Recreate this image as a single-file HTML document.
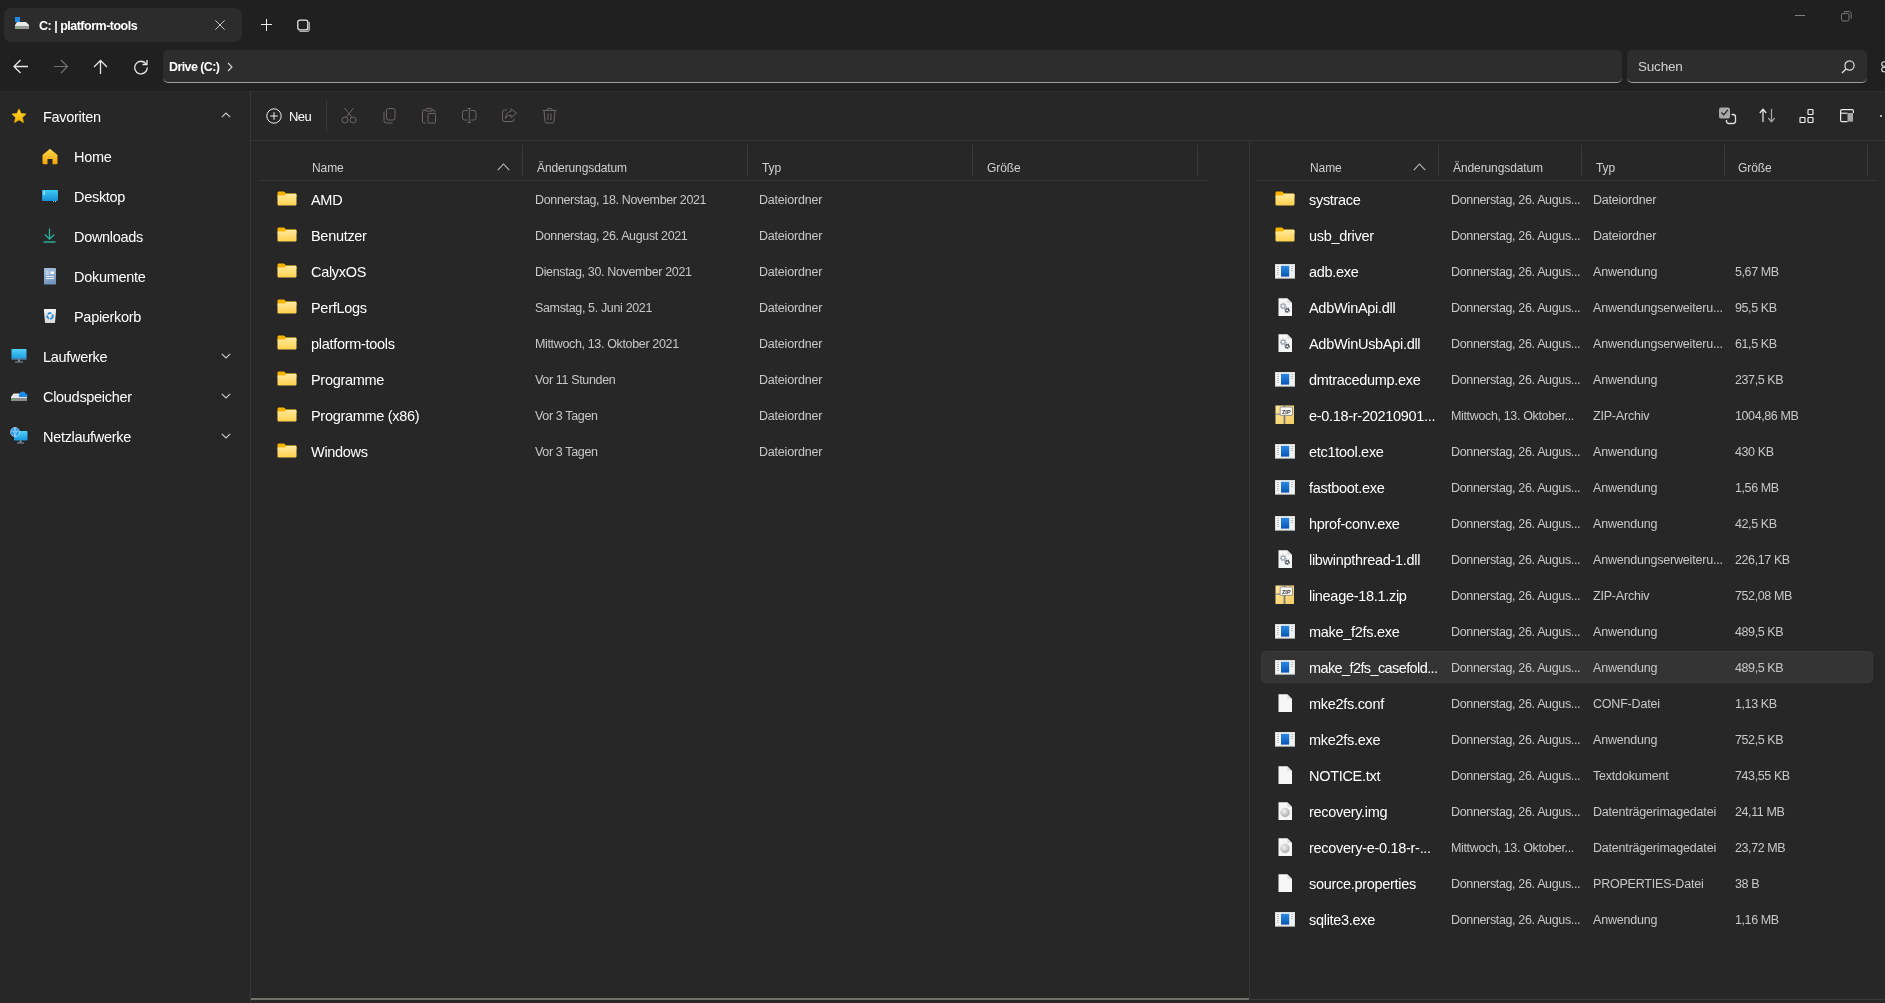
<!DOCTYPE html><html><head><meta charset="utf-8"><style>
html,body{margin:0;padding:0;width:1885px;height:1003px;overflow:hidden;background:#272727;font-family:"Liberation Sans", sans-serif;}
.t{position:absolute;white-space:nowrap;}
#root{position:absolute;left:0;top:0;width:1885px;height:1003px;will-change:transform;}
</style></head><body><div id="root">
<div style="position:absolute;left:0px;top:0px;width:1885px;height:91px;background:#202020"></div>
<div style="position:absolute;left:0px;top:91px;width:1885px;height:912px;background:#272727"></div>
<div style="position:absolute;left:250px;top:91px;width:1635px;height:1px;background:#2f2f2f"></div>
<div style="position:absolute;left:0px;top:91px;width:250px;height:1px;background:#2b2b2b"></div>
<div style="position:absolute;left:250px;top:91px;width:1px;height:912px;background:#373737"></div>
<div style="position:absolute;left:4px;top:8px;width:238px;height:34px;background:#2c2c2c;border-radius:7px"></div>
<svg style="position:absolute;left:14px;top:16px" width="16" height="14" viewBox="0 0 16 14"><rect x="1" y="1" width="5" height="5" fill="#1e88e5"/><path d="M3 6 L12 6 L15 9 L15 13 L1 13 L1 9 Z" fill="#e8e8e8"/><rect x="1" y="10" width="14" height="3" fill="#9a9a9a"/><rect x="3" y="11" width="2" height="1" fill="#3fd13f"/></svg>
<div class="t" style="left:39px;top:20.22px;font-size:12.5px;line-height:12.5px;color:#ffffff;font-weight:700;letter-spacing:-0.5px;">C: | platform-tools</div>
<svg style="position:absolute;left:215px;top:20px" width="10" height="10" viewBox="0 0 10 10"><path d="M0.3 0.3 L9.7 9.7 M9.7 0.3 L0.3 9.7" stroke="#c4c4c4" stroke-width="1"/></svg>
<svg style="position:absolute;left:261px;top:19px" width="11" height="12" viewBox="0 0 11 12"><path d="M5.5 0 V12 M0 5.5 H11" stroke="#ececec" stroke-width="1"/></svg>
<svg style="position:absolute;left:296px;top:19px" width="15" height="14" viewBox="0 0 15 14"><rect x="1.8" y="1.2" width="10" height="9.6" rx="2" fill="none" stroke="#e6e6e6" stroke-width="1.3"/><path d="M3.5 12.3 H11 Q13.3 12.3 13.3 10 V3" fill="none" stroke="#b0b0b0" stroke-width="1.3"/></svg>
<div style="position:absolute;left:1795px;top:15px;width:10px;height:1px;background:#808080"></div>
<svg style="position:absolute;left:1841px;top:11px" width="11" height="11" viewBox="0 0 11 11"><rect x="0.5" y="2.5" width="7.5" height="7.5" rx="1.5" fill="none" stroke="#767676"/><path d="M2.8 0.5 H8.2 Q10.2 0.5 10.2 2.5 V7.5" fill="none" stroke="#767676"/></svg>
<svg style="position:absolute;left:13px;top:59px" width="16" height="15" viewBox="0 0 16 15"><path d="M15 7.5 H1.5 M7.5 1 L1 7.5 L7.5 14" fill="none" stroke="#e8e8e8" stroke-width="1.3"/></svg>
<svg style="position:absolute;left:53px;top:59px" width="16" height="15" viewBox="0 0 16 15"><path d="M1 7.5 H14.3 M8 1 L14.5 7.5 L8 14" fill="none" stroke="#737373" stroke-width="1.2"/></svg>
<svg style="position:absolute;left:93px;top:59px" width="15" height="16" viewBox="0 0 15 16"><path d="M7.5 15 V1.5 M1 8 L7.5 1.5 L14 8" fill="none" stroke="#e8e8e8" stroke-width="1.3"/></svg>
<svg style="position:absolute;left:133px;top:59px" width="16" height="16" viewBox="0 0 16 16"><path d="M13.2 5 A6.3 6.3 0 1 0 14.3 8.5" fill="none" stroke="#e8e8e8" stroke-width="1.3"/><path d="M14 1 V5.5 H9.5" fill="none" stroke="#e8e8e8" stroke-width="1.3"/></svg>
<div style="position:absolute;left:163px;top:50px;width:1459px;height:32px;background:#2d2d2d;border-radius:5px;border-bottom:1px solid #9d9d9d;box-sizing:content-box"></div>
<div class="t" style="left:169px;top:60.72px;font-size:12.5px;line-height:12.5px;color:#ffffff;font-weight:700;letter-spacing:-0.6px;">Drive (C:)</div>
<svg style="position:absolute;left:227px;top:62px" width="6" height="10" viewBox="0 0 6 10"><path d="M1 1 L5 5 L1 9" fill="none" stroke="#dcdcdc" stroke-width="1.1"/></svg>
<div style="position:absolute;left:1627px;top:50px;width:240px;height:32px;background:#2d2d2d;border-radius:5px;border-bottom:1px solid #9d9d9d;box-sizing:content-box"></div>
<div class="t" style="left:1638px;top:60.17px;font-size:13.5px;line-height:13.5px;color:#d0d0d0;font-weight:400;letter-spacing:-0.2px;">Suchen</div>
<svg style="position:absolute;left:1841px;top:60px" width="14" height="14" viewBox="0 0 14 14"><circle cx="8.5" cy="5.5" r="4.6" fill="none" stroke="#e0e0e0" stroke-width="1.2"/><path d="M5.2 8.8 L1 13" stroke="#e0e0e0" stroke-width="1.3"/></svg>
<svg style="position:absolute;left:1880px;top:61px" width="5" height="12" viewBox="0 0 5 12"><circle cx="4" cy="3" r="2.3" fill="none" stroke="#ddd" stroke-width="1.1"/><circle cx="4" cy="8.5" r="2.3" fill="none" stroke="#ddd" stroke-width="1.1"/></svg>
<svg style="position:absolute;left:266px;top:107.5px" width="16" height="16" viewBox="0 0 16 16"><circle cx="8" cy="8" r="7.2" fill="none" stroke="#ececec" stroke-width="1"/><path d="M8 4.2 V11.8 M4.2 8 H11.8" stroke="#ececec" stroke-width="1"/></svg>
<div class="t" style="left:289px;top:109.70px;font-size:13px;line-height:13px;color:#ffffff;font-weight:400;letter-spacing:-0.6px;">Neu</div>
<div style="position:absolute;left:326px;top:100px;width:1px;height:31px;background:#3a3a3a"></div>
<svg style="position:absolute;left:341px;top:107px" width="17" height="17" viewBox="0 0 17 17"><path d="M3.5 1 L10.8 10.2 M12.5 1 L5.2 10.2" fill="none" stroke="#6a6764" stroke-width="1"/><circle cx="4" cy="13" r="3" fill="none" stroke="#6a6764" stroke-width="1"/><circle cx="12" cy="13" r="3" fill="none" stroke="#6a6764" stroke-width="1"/></svg>
<svg style="position:absolute;left:382px;top:107px" width="15" height="17" viewBox="0 0 15 17"><rect x="4.5" y="1.5" width="8.5" height="11.5" rx="2" fill="none" stroke="#6a6764" stroke-width="1"/><path d="M2 4.5 V13.5 Q2 16 4.5 16 H10.5" fill="none" stroke="#6a6764" stroke-width="1"/></svg>
<svg style="position:absolute;left:421px;top:107px" width="17" height="17" viewBox="0 0 17 17"><path d="M4.5 3 H3 Q1.5 3 1.5 4.5 V14.5 Q1.5 16 3 16 H5 M11 3 H12.5 Q14 3 14 4.5 V5.5" fill="none" stroke="#6a6764" stroke-width="1"/><path d="M4.5 4 V2.5 Q4.5 1.5 5.5 1.5 H10 Q11 1.5 11 2.5 V4 Z" fill="none" stroke="#6a6764" stroke-width="1"/><rect x="7" y="6.5" width="7.5" height="9.5" rx="0.8" fill="none" stroke="#6a6764" stroke-width="1"/></svg>
<svg style="position:absolute;left:461px;top:107px" width="17" height="17" viewBox="0 0 17 17"><path d="M6.5 3.5 H3.5 Q1.5 3.5 1.5 5.5 V11 Q1.5 13 3.5 13 H6.5 M10 3.5 H13 Q15 3.5 15 5.5 V11 Q15 13 13 13 H10 M8.3 1.5 V15.5 M6.5 1.5 H10 M6.5 15.5 H10" fill="none" stroke="#6a6764" stroke-width="1"/></svg>
<svg style="position:absolute;left:501px;top:107px" width="17" height="16" viewBox="0 0 17 16"><path d="M6 3 H3.5 Q1.5 3 1.5 5 V12.5 Q1.5 14.5 3.5 14.5 H11 Q13 14.5 13 12.5 V11.5" fill="none" stroke="#6a6764" stroke-width="1"/><path d="M10 1.8 L15.5 6.2 L10 10.5 V8 Q6.5 8 4.5 11.5 Q5 4.8 10 4.5 Z" fill="none" stroke="#6a6764" stroke-width="1" stroke-linejoin="round"/></svg>
<svg style="position:absolute;left:541px;top:107px" width="17" height="17" viewBox="0 0 17 17"><path d="M1.5 3.5 H15.5 M6 3.5 V2.5 Q6 1.5 7 1.5 H10 Q11 1.5 11 2.5 V3.5 M3 3.5 L4 14.5 Q4.2 16 5.5 16 H11.5 Q12.8 16 13 14.5 L14 3.5 M7 6.5 V13 M10 6.5 V13" fill="none" stroke="#6a6764" stroke-width="1"/></svg>
<svg style="position:absolute;left:1718px;top:106px" width="19" height="19" viewBox="0 0 19 19"><rect x="1" y="1.5" width="11" height="11" rx="2" fill="#a8a8a8"/><path d="M3.5 6.5 L5.8 8.8 L9.8 3.8" fill="none" stroke="#202020" stroke-width="1.2"/><path d="M13.5 8.5 H15 Q17.5 8.5 17.5 11 V15 Q17.5 17.5 15 17.5 H11 Q8.5 17.5 8.5 15 V14" fill="none" stroke="#e0e0e0" stroke-width="1.3"/></svg>
<svg style="position:absolute;left:1759px;top:108px" width="17" height="15" viewBox="0 0 17 15"><path d="M4 14 V1.5 M0.8 5 L4 1.2 L7.2 5" fill="none" stroke="#ececec" stroke-width="1.2"/><path d="M12.5 1 V13.5 M9.3 10 L12.5 13.8 L15.7 10" fill="none" stroke="#a8a8a8" stroke-width="1.2"/></svg>
<svg style="position:absolute;left:1799px;top:108px" width="16" height="16" viewBox="0 0 16 16"><rect x="9" y="1.5" width="5" height="5" rx="0.8" fill="none" stroke="#f0f0f0" stroke-width="1.2"/><rect x="1" y="9.5" width="5" height="5" rx="0.8" fill="none" stroke="#f0f0f0" stroke-width="1.2"/><rect x="9" y="9.5" width="5" height="5" rx="0.8" fill="none" stroke="#f0f0f0" stroke-width="1.2"/></svg>
<svg style="position:absolute;left:1839px;top:108px" width="16" height="15" viewBox="0 0 16 15"><rect x="8.5" y="5" width="5.5" height="8.6" fill="#a8a8a8"/><path d="M8.5 13.6 H3 Q1.6 13.6 1.6 12 V3 Q1.6 1.6 3 1.6 H13 Q14.4 1.6 14.4 3 V5" fill="none" stroke="#ececec" stroke-width="1.2"/><path d="M1.6 5.2 H8.5" stroke="#ececec" stroke-width="1.1"/></svg>
<div style="position:absolute;left:1880px;top:115px;width:2px;height:2px;background:#e0e0e0;border-radius:1px"></div>
<svg style="position:absolute;left:11px;top:108px" width="16" height="16" viewBox="0 0 16 16"><defs><linearGradient id="gs" x1="0" y1="0" x2="0" y2="1"><stop offset="0" stop-color="#ffd43b"/><stop offset="1" stop-color="#f7b400"/></linearGradient></defs><path d="M8 1 L10.1 5.6 L15 6.1 L11.3 9.4 L12.4 14.4 L8 11.8 L3.6 14.4 L4.7 9.4 L1 6.1 L5.9 5.6 Z" fill="url(#gs)" stroke="#f5b800" stroke-width="0.8" stroke-linejoin="round"/></svg>
<div class="t" style="left:43px;top:109.63px;font-size:14.5px;line-height:14.5px;color:#ffffff;font-weight:400;letter-spacing:-0.3px;">Favoriten</div>
<svg style="position:absolute;left:221px;top:112px" width="10" height="6" viewBox="0 0 10 6"><path d="M0.8 5.2 L5 1 L9.2 5.2" fill="none" stroke="#cfcfcf" stroke-width="1.1"/></svg>
<svg style="position:absolute;left:42px;top:148px" width="16" height="17" viewBox="0 0 16 17"><defs><linearGradient id="gh" x1="0" y1="0" x2="0" y2="1"><stop offset="0" stop-color="#ffd64a"/><stop offset="1" stop-color="#f0a30a"/></linearGradient></defs><path d="M8 0.8 L15.5 7 V15 Q15.5 16.3 14.2 16.3 H10.5 V11 H5.5 V16.3 H1.8 Q0.5 16.3 0.5 15 V7 Z" fill="url(#gh)"/></svg>
<div class="t" style="left:74px;top:149.93px;font-size:14.5px;line-height:14.5px;color:#ffffff;font-weight:400;letter-spacing:-0.3px;">Home</div>
<svg style="position:absolute;left:42px;top:189px" width="16" height="14" viewBox="0 0 16 14"><defs><linearGradient id="gd" x1="0" y1="0" x2="0" y2="1"><stop offset="0" stop-color="#3ccbf4"/><stop offset="1" stop-color="#1a8ed8"/></linearGradient></defs><rect x="0" y="1" width="16" height="11" rx="0.8" fill="url(#gd)"/><rect x="1.5" y="2.5" width="1.5" height="1" fill="#fff"/><rect x="1.5" y="4.5" width="1.5" height="1" fill="#fff"/><rect x="11" y="12" width="1" height="1" fill="#9cd"/><rect x="13" y="12" width="1" height="1" fill="#9cd"/></svg>
<div class="t" style="left:74px;top:189.93px;font-size:14.5px;line-height:14.5px;color:#ffffff;font-weight:400;letter-spacing:-0.3px;">Desktop</div>
<svg style="position:absolute;left:43px;top:228px" width="13" height="15" viewBox="0 0 13 15"><path d="M6.5 0.5 V11 M1.8 6.5 L6.5 11.2 L11.2 6.5" fill="none" stroke="#2bb5a0" stroke-width="1.3"/><path d="M0.5 14 H12.5" stroke="#2bb5a0" stroke-width="1.4"/></svg>
<div class="t" style="left:74px;top:229.93px;font-size:14.5px;line-height:14.5px;color:#ffffff;font-weight:400;letter-spacing:-0.3px;">Downloads</div>
<svg style="position:absolute;left:44px;top:268px" width="12" height="17" viewBox="0 0 12 17"><defs><linearGradient id="gk" x1="0" y1="0" x2="0.3" y2="1"><stop offset="0" stop-color="#a9c5e2"/><stop offset="1" stop-color="#7596bd"/></linearGradient></defs><rect x="0" y="0" width="12" height="16.5" rx="1" fill="url(#gk)"/><path d="M2 4 H5 M2 6 H5 M2 8.5 H10 M2 10.5 H10" stroke="#dfe8f2" stroke-width="1"/><rect x="6.5" y="3.5" width="3.5" height="2.5" fill="#ffffff"/></svg>
<div class="t" style="left:74px;top:269.93px;font-size:14.5px;line-height:14.5px;color:#ffffff;font-weight:400;letter-spacing:-0.3px;">Dokumente</div>
<svg style="position:absolute;left:44px;top:309px" width="12" height="14" viewBox="0 0 12 14"><defs><linearGradient id="gb" x1="0" y1="0" x2="0" y2="1"><stop offset="0" stop-color="#f4f4f4"/><stop offset="1" stop-color="#d8d8d8"/></linearGradient></defs><path d="M0 0.5 Q0 0 0.5 0 H11.5 Q12 0 12 0.5 V2 L11 13.5 Q11 14 10.5 14 H1.5 Q1 14 1 13.5 L0 2 Z" fill="url(#gb)"/><circle cx="6" cy="7" r="2.8" fill="none" stroke="#1e8ae6" stroke-width="1.7" stroke-dasharray="4 1.2"/></svg>
<div class="t" style="left:74px;top:309.93px;font-size:14.5px;line-height:14.5px;color:#ffffff;font-weight:400;letter-spacing:-0.3px;">Papierkorb</div>
<svg style="position:absolute;left:11px;top:348px" width="16" height="16" viewBox="0 0 16 16"><defs><linearGradient id="gl" x1="0" y1="0" x2="0" y2="1"><stop offset="0" stop-color="#4fd2f8"/><stop offset="1" stop-color="#1a98e0"/></linearGradient></defs><rect x="0.5" y="1" width="15" height="10.5" rx="0.8" fill="url(#gl)"/><rect x="0.5" y="10.5" width="15" height="1.2" fill="#5a6b7a"/><rect x="7" y="11.5" width="2" height="2" fill="#8899aa"/><rect x="4" y="13.5" width="8" height="1" fill="#8899aa"/></svg>
<div class="t" style="left:43px;top:349.63px;font-size:14.5px;line-height:14.5px;color:#ffffff;font-weight:400;letter-spacing:-0.3px;">Laufwerke</div>
<svg style="position:absolute;left:221px;top:353px" width="10" height="6" viewBox="0 0 10 6"><path d="M0.8 0.8 L5 5 L9.2 0.8" fill="none" stroke="#cfcfcf" stroke-width="1.1"/></svg>
<svg style="position:absolute;left:10px;top:389px" width="18" height="14" viewBox="0 0 18 14"><path d="M1 8 L3.5 4.5 H14.5 L17 8 V12 H1 Z" fill="#e6e6e6"/><rect x="1" y="9" width="16" height="3" fill="#8a8a8a"/><rect x="3" y="10" width="2" height="1" fill="#3fd13f"/><path d="M9 6 Q9.5 2.5 12.5 2.5 Q15 2.5 15.5 4.5 Q17.5 4.5 17.5 6.5 Q17.5 8 16 8 H9.5 Q8 8 9 6 Z" fill="#1e88e5"/></svg>
<div class="t" style="left:43px;top:389.63px;font-size:14.5px;line-height:14.5px;color:#ffffff;font-weight:400;letter-spacing:-0.3px;">Cloudspeicher</div>
<svg style="position:absolute;left:221px;top:393px" width="10" height="6" viewBox="0 0 10 6"><path d="M0.8 0.8 L5 5 L9.2 0.8" fill="none" stroke="#cfcfcf" stroke-width="1.1"/></svg>
<svg style="position:absolute;left:10px;top:427px" width="18" height="17" viewBox="0 0 18 17"><defs><linearGradient id="gn" x1="0" y1="0" x2="0" y2="1"><stop offset="0" stop-color="#4fd2f8"/><stop offset="1" stop-color="#1a98e0"/></linearGradient></defs><rect x="4" y="4" width="13.5" height="9.5" rx="0.8" fill="url(#gn)"/><rect x="9.5" y="13.5" width="2" height="2" fill="#8899aa"/><rect x="7" y="15.5" width="7" height="1" fill="#8899aa"/><circle cx="5" cy="5" r="4.5" fill="#2a9be8" stroke="#e0f0ff" stroke-width="0.6"/><path d="M1.5 4 Q5 6 8.5 4 M5 0.5 Q2.5 5 5 9.5 M5 0.5 Q7.5 5 5 9.5" fill="none" stroke="#bfe4ff" stroke-width="0.6"/></svg>
<div class="t" style="left:43px;top:429.63px;font-size:14.5px;line-height:14.5px;color:#ffffff;font-weight:400;letter-spacing:-0.3px;">Netzlaufwerke</div>
<svg style="position:absolute;left:221px;top:433px" width="10" height="6" viewBox="0 0 10 6"><path d="M0.8 0.8 L5 5 L9.2 0.8" fill="none" stroke="#cfcfcf" stroke-width="1.1"/></svg>
<div class="t" style="left:312px;top:162.14px;font-size:12px;line-height:12px;color:#d0d0d0;font-weight:400;letter-spacing:-0.1px;">Name</div>
<svg style="position:absolute;left:497px;top:163px" width="13" height="8" viewBox="0 0 13 8"><path d="M0.8 7.2 L6.5 1 L12.2 7.2" fill="none" stroke="#bdbdbd" stroke-width="1.1"/></svg>
<div style="position:absolute;left:522px;top:145px;width:1px;height:31px;background:#3a3a3a"></div>
<div style="position:absolute;left:747px;top:145px;width:1px;height:31px;background:#3a3a3a"></div>
<div style="position:absolute;left:972px;top:145px;width:1px;height:31px;background:#3a3a3a"></div>
<div style="position:absolute;left:1197px;top:145px;width:1px;height:31px;background:#3a3a3a"></div>
<div class="t" style="left:537px;top:162.14px;font-size:12px;line-height:12px;color:#d0d0d0;font-weight:400;letter-spacing:-0.1px;">Änderungsdatum</div>
<div class="t" style="left:762px;top:162.14px;font-size:12px;line-height:12px;color:#d0d0d0;font-weight:400;letter-spacing:-0.1px;">Typ</div>
<div class="t" style="left:987px;top:162.14px;font-size:12px;line-height:12px;color:#d0d0d0;font-weight:400;letter-spacing:-0.1px;">Größe</div>
<div style="position:absolute;left:259px;top:180px;width:948px;height:1px;background:#363636"></div>
<svg style="position:absolute;left:277px;top:191px" width="20" height="15" viewBox="0 0 20 15"><defs><linearGradient id="gf191" x1="0" y1="0" x2="0" y2="1"><stop offset="0" stop-color="#ffeaa0"/><stop offset="1" stop-color="#ffd04c"/></linearGradient></defs><path d="M0.5 1.8 Q0.5 0.5 1.8 0.5 H7 L9.3 2.6 H18.2 Q19.5 2.6 19.5 3.9 V6 H0.5 Z" fill="#f5b300"/><path d="M0.5 4.4 H7.5 L9.5 2.7 H18.2 Q19.5 2.7 19.5 4 V13.2 Q19.5 14.5 18.2 14.5 H1.8 Q0.5 14.5 0.5 13.2 Z" fill="url(#gf191)"/></svg>
<div class="t" style="left:311px;top:193.33px;font-size:14.5px;line-height:14.5px;color:#ffffff;font-weight:400;letter-spacing:-0.3px;">AMD</div>
<div class="t" style="left:535px;top:193.82px;font-size:12.5px;line-height:12.5px;color:#c8c8c8;font-weight:400;letter-spacing:-0.35px;">Donnerstag, 18. November 2021</div>
<div class="t" style="left:759px;top:193.82px;font-size:12.5px;line-height:12.5px;color:#c8c8c8;font-weight:400;letter-spacing:-0.2px;">Dateiordner</div>
<svg style="position:absolute;left:277px;top:227px" width="20" height="15" viewBox="0 0 20 15"><defs><linearGradient id="gf227" x1="0" y1="0" x2="0" y2="1"><stop offset="0" stop-color="#ffeaa0"/><stop offset="1" stop-color="#ffd04c"/></linearGradient></defs><path d="M0.5 1.8 Q0.5 0.5 1.8 0.5 H7 L9.3 2.6 H18.2 Q19.5 2.6 19.5 3.9 V6 H0.5 Z" fill="#f5b300"/><path d="M0.5 4.4 H7.5 L9.5 2.7 H18.2 Q19.5 2.7 19.5 4 V13.2 Q19.5 14.5 18.2 14.5 H1.8 Q0.5 14.5 0.5 13.2 Z" fill="url(#gf227)"/></svg>
<div class="t" style="left:311px;top:229.33px;font-size:14.5px;line-height:14.5px;color:#ffffff;font-weight:400;letter-spacing:-0.3px;">Benutzer</div>
<div class="t" style="left:535px;top:229.82px;font-size:12.5px;line-height:12.5px;color:#c8c8c8;font-weight:400;letter-spacing:-0.35px;">Donnerstag, 26. August 2021</div>
<div class="t" style="left:759px;top:229.82px;font-size:12.5px;line-height:12.5px;color:#c8c8c8;font-weight:400;letter-spacing:-0.2px;">Dateiordner</div>
<svg style="position:absolute;left:277px;top:263px" width="20" height="15" viewBox="0 0 20 15"><defs><linearGradient id="gf263" x1="0" y1="0" x2="0" y2="1"><stop offset="0" stop-color="#ffeaa0"/><stop offset="1" stop-color="#ffd04c"/></linearGradient></defs><path d="M0.5 1.8 Q0.5 0.5 1.8 0.5 H7 L9.3 2.6 H18.2 Q19.5 2.6 19.5 3.9 V6 H0.5 Z" fill="#f5b300"/><path d="M0.5 4.4 H7.5 L9.5 2.7 H18.2 Q19.5 2.7 19.5 4 V13.2 Q19.5 14.5 18.2 14.5 H1.8 Q0.5 14.5 0.5 13.2 Z" fill="url(#gf263)"/></svg>
<div class="t" style="left:311px;top:265.33px;font-size:14.5px;line-height:14.5px;color:#ffffff;font-weight:400;letter-spacing:-0.3px;">CalyxOS</div>
<div class="t" style="left:535px;top:265.82px;font-size:12.5px;line-height:12.5px;color:#c8c8c8;font-weight:400;letter-spacing:-0.35px;">Dienstag, 30. November 2021</div>
<div class="t" style="left:759px;top:265.82px;font-size:12.5px;line-height:12.5px;color:#c8c8c8;font-weight:400;letter-spacing:-0.2px;">Dateiordner</div>
<svg style="position:absolute;left:277px;top:299px" width="20" height="15" viewBox="0 0 20 15"><defs><linearGradient id="gf299" x1="0" y1="0" x2="0" y2="1"><stop offset="0" stop-color="#ffeaa0"/><stop offset="1" stop-color="#ffd04c"/></linearGradient></defs><path d="M0.5 1.8 Q0.5 0.5 1.8 0.5 H7 L9.3 2.6 H18.2 Q19.5 2.6 19.5 3.9 V6 H0.5 Z" fill="#f5b300"/><path d="M0.5 4.4 H7.5 L9.5 2.7 H18.2 Q19.5 2.7 19.5 4 V13.2 Q19.5 14.5 18.2 14.5 H1.8 Q0.5 14.5 0.5 13.2 Z" fill="url(#gf299)"/></svg>
<div class="t" style="left:311px;top:301.33px;font-size:14.5px;line-height:14.5px;color:#ffffff;font-weight:400;letter-spacing:-0.3px;">PerfLogs</div>
<div class="t" style="left:535px;top:301.82px;font-size:12.5px;line-height:12.5px;color:#c8c8c8;font-weight:400;letter-spacing:-0.35px;">Samstag, 5. Juni 2021</div>
<div class="t" style="left:759px;top:301.82px;font-size:12.5px;line-height:12.5px;color:#c8c8c8;font-weight:400;letter-spacing:-0.2px;">Dateiordner</div>
<svg style="position:absolute;left:277px;top:335px" width="20" height="15" viewBox="0 0 20 15"><defs><linearGradient id="gf335" x1="0" y1="0" x2="0" y2="1"><stop offset="0" stop-color="#ffeaa0"/><stop offset="1" stop-color="#ffd04c"/></linearGradient></defs><path d="M0.5 1.8 Q0.5 0.5 1.8 0.5 H7 L9.3 2.6 H18.2 Q19.5 2.6 19.5 3.9 V6 H0.5 Z" fill="#f5b300"/><path d="M0.5 4.4 H7.5 L9.5 2.7 H18.2 Q19.5 2.7 19.5 4 V13.2 Q19.5 14.5 18.2 14.5 H1.8 Q0.5 14.5 0.5 13.2 Z" fill="url(#gf335)"/></svg>
<div class="t" style="left:311px;top:337.33px;font-size:14.5px;line-height:14.5px;color:#ffffff;font-weight:400;letter-spacing:-0.3px;">platform-tools</div>
<div class="t" style="left:535px;top:337.82px;font-size:12.5px;line-height:12.5px;color:#c8c8c8;font-weight:400;letter-spacing:-0.35px;">Mittwoch, 13. Oktober 2021</div>
<div class="t" style="left:759px;top:337.82px;font-size:12.5px;line-height:12.5px;color:#c8c8c8;font-weight:400;letter-spacing:-0.2px;">Dateiordner</div>
<svg style="position:absolute;left:277px;top:371px" width="20" height="15" viewBox="0 0 20 15"><defs><linearGradient id="gf371" x1="0" y1="0" x2="0" y2="1"><stop offset="0" stop-color="#ffeaa0"/><stop offset="1" stop-color="#ffd04c"/></linearGradient></defs><path d="M0.5 1.8 Q0.5 0.5 1.8 0.5 H7 L9.3 2.6 H18.2 Q19.5 2.6 19.5 3.9 V6 H0.5 Z" fill="#f5b300"/><path d="M0.5 4.4 H7.5 L9.5 2.7 H18.2 Q19.5 2.7 19.5 4 V13.2 Q19.5 14.5 18.2 14.5 H1.8 Q0.5 14.5 0.5 13.2 Z" fill="url(#gf371)"/></svg>
<div class="t" style="left:311px;top:373.33px;font-size:14.5px;line-height:14.5px;color:#ffffff;font-weight:400;letter-spacing:-0.3px;">Programme</div>
<div class="t" style="left:535px;top:373.82px;font-size:12.5px;line-height:12.5px;color:#c8c8c8;font-weight:400;letter-spacing:-0.35px;">Vor 11 Stunden</div>
<div class="t" style="left:759px;top:373.82px;font-size:12.5px;line-height:12.5px;color:#c8c8c8;font-weight:400;letter-spacing:-0.2px;">Dateiordner</div>
<svg style="position:absolute;left:277px;top:407px" width="20" height="15" viewBox="0 0 20 15"><defs><linearGradient id="gf407" x1="0" y1="0" x2="0" y2="1"><stop offset="0" stop-color="#ffeaa0"/><stop offset="1" stop-color="#ffd04c"/></linearGradient></defs><path d="M0.5 1.8 Q0.5 0.5 1.8 0.5 H7 L9.3 2.6 H18.2 Q19.5 2.6 19.5 3.9 V6 H0.5 Z" fill="#f5b300"/><path d="M0.5 4.4 H7.5 L9.5 2.7 H18.2 Q19.5 2.7 19.5 4 V13.2 Q19.5 14.5 18.2 14.5 H1.8 Q0.5 14.5 0.5 13.2 Z" fill="url(#gf407)"/></svg>
<div class="t" style="left:311px;top:409.33px;font-size:14.5px;line-height:14.5px;color:#ffffff;font-weight:400;letter-spacing:-0.3px;">Programme (x86)</div>
<div class="t" style="left:535px;top:409.82px;font-size:12.5px;line-height:12.5px;color:#c8c8c8;font-weight:400;letter-spacing:-0.35px;">Vor 3 Tagen</div>
<div class="t" style="left:759px;top:409.82px;font-size:12.5px;line-height:12.5px;color:#c8c8c8;font-weight:400;letter-spacing:-0.2px;">Dateiordner</div>
<svg style="position:absolute;left:277px;top:443px" width="20" height="15" viewBox="0 0 20 15"><defs><linearGradient id="gf443" x1="0" y1="0" x2="0" y2="1"><stop offset="0" stop-color="#ffeaa0"/><stop offset="1" stop-color="#ffd04c"/></linearGradient></defs><path d="M0.5 1.8 Q0.5 0.5 1.8 0.5 H7 L9.3 2.6 H18.2 Q19.5 2.6 19.5 3.9 V6 H0.5 Z" fill="#f5b300"/><path d="M0.5 4.4 H7.5 L9.5 2.7 H18.2 Q19.5 2.7 19.5 4 V13.2 Q19.5 14.5 18.2 14.5 H1.8 Q0.5 14.5 0.5 13.2 Z" fill="url(#gf443)"/></svg>
<div class="t" style="left:311px;top:445.33px;font-size:14.5px;line-height:14.5px;color:#ffffff;font-weight:400;letter-spacing:-0.3px;">Windows</div>
<div class="t" style="left:535px;top:445.82px;font-size:12.5px;line-height:12.5px;color:#c8c8c8;font-weight:400;letter-spacing:-0.35px;">Vor 3 Tagen</div>
<div class="t" style="left:759px;top:445.82px;font-size:12.5px;line-height:12.5px;color:#c8c8c8;font-weight:400;letter-spacing:-0.2px;">Dateiordner</div>
<div style="position:absolute;left:251px;top:998px;width:998px;height:2px;background:#72706b"></div>
<div style="position:absolute;left:1250px;top:999px;width:635px;height:1px;background:#3a3a3a"></div>
<div style="position:absolute;left:1249px;top:140px;width:1px;height:859px;background:#353535"></div>
<div style="position:absolute;left:250px;top:140px;width:1635px;height:1px;background:#343434"></div>
<div class="t" style="left:1310px;top:162.14px;font-size:12px;line-height:12px;color:#d0d0d0;font-weight:400;letter-spacing:-0.1px;">Name</div>
<svg style="position:absolute;left:1413px;top:163px" width="13" height="8" viewBox="0 0 13 8"><path d="M0.8 7.2 L6.5 1 L12.2 7.2" fill="none" stroke="#bdbdbd" stroke-width="1.1"/></svg>
<div style="position:absolute;left:1438px;top:145px;width:1px;height:31px;background:#3a3a3a"></div>
<div style="position:absolute;left:1581px;top:145px;width:1px;height:31px;background:#3a3a3a"></div>
<div style="position:absolute;left:1724px;top:145px;width:1px;height:31px;background:#3a3a3a"></div>
<div style="position:absolute;left:1867px;top:145px;width:1px;height:31px;background:#3a3a3a"></div>
<div class="t" style="left:1453px;top:162.14px;font-size:12px;line-height:12px;color:#d0d0d0;font-weight:400;letter-spacing:-0.1px;">Änderungsdatum</div>
<div class="t" style="left:1596px;top:162.14px;font-size:12px;line-height:12px;color:#d0d0d0;font-weight:400;letter-spacing:-0.1px;">Typ</div>
<div class="t" style="left:1738px;top:162.14px;font-size:12px;line-height:12px;color:#d0d0d0;font-weight:400;letter-spacing:-0.1px;">Größe</div>
<div style="position:absolute;left:1257px;top:180px;width:620px;height:1px;background:#363636"></div>
<div style="position:absolute;left:1261px;top:651px;width:612px;height:32px;background:#343434;border-radius:5px;box-shadow:inset 0 0 0 1px #393939"></div>
<svg style="position:absolute;left:1275px;top:191px" width="20" height="15" viewBox="0 0 20 15"><defs><linearGradient id="gf191" x1="0" y1="0" x2="0" y2="1"><stop offset="0" stop-color="#ffeaa0"/><stop offset="1" stop-color="#ffd04c"/></linearGradient></defs><path d="M0.5 1.8 Q0.5 0.5 1.8 0.5 H7 L9.3 2.6 H18.2 Q19.5 2.6 19.5 3.9 V6 H0.5 Z" fill="#f5b300"/><path d="M0.5 4.4 H7.5 L9.5 2.7 H18.2 Q19.5 2.7 19.5 4 V13.2 Q19.5 14.5 18.2 14.5 H1.8 Q0.5 14.5 0.5 13.2 Z" fill="url(#gf191)"/></svg>
<div class="t" style="left:1309px;top:193.33px;font-size:14.5px;line-height:14.5px;color:#ffffff;font-weight:400;letter-spacing:-0.3px;">systrace</div>
<div class="t" style="left:1451px;top:193.82px;font-size:12.5px;line-height:12.5px;color:#c8c8c8;font-weight:400;letter-spacing:-0.35px;">Donnerstag, 26. Augus...</div>
<div class="t" style="left:1593px;top:193.82px;font-size:12.5px;line-height:12.5px;color:#c8c8c8;font-weight:400;letter-spacing:-0.2px;">Dateiordner</div>
<svg style="position:absolute;left:1275px;top:227px" width="20" height="15" viewBox="0 0 20 15"><defs><linearGradient id="gf227" x1="0" y1="0" x2="0" y2="1"><stop offset="0" stop-color="#ffeaa0"/><stop offset="1" stop-color="#ffd04c"/></linearGradient></defs><path d="M0.5 1.8 Q0.5 0.5 1.8 0.5 H7 L9.3 2.6 H18.2 Q19.5 2.6 19.5 3.9 V6 H0.5 Z" fill="#f5b300"/><path d="M0.5 4.4 H7.5 L9.5 2.7 H18.2 Q19.5 2.7 19.5 4 V13.2 Q19.5 14.5 18.2 14.5 H1.8 Q0.5 14.5 0.5 13.2 Z" fill="url(#gf227)"/></svg>
<div class="t" style="left:1309px;top:229.33px;font-size:14.5px;line-height:14.5px;color:#ffffff;font-weight:400;letter-spacing:-0.3px;">usb_driver</div>
<div class="t" style="left:1451px;top:229.82px;font-size:12.5px;line-height:12.5px;color:#c8c8c8;font-weight:400;letter-spacing:-0.35px;">Donnerstag, 26. Augus...</div>
<div class="t" style="left:1593px;top:229.82px;font-size:12.5px;line-height:12.5px;color:#c8c8c8;font-weight:400;letter-spacing:-0.2px;">Dateiordner</div>
<svg style="position:absolute;left:1275px;top:264px" width="20" height="15" viewBox="0 0 20 15"><defs><linearGradient id="ge264" x1="0" y1="0" x2="0" y2="1"><stop offset="0" stop-color="#2a8ae4"/><stop offset="1" stop-color="#0a56b4"/></linearGradient></defs><rect x="0" y="0" width="20" height="14.5" fill="#f3f3f3"/><rect x="0.5" y="0.5" width="19" height="13.5" fill="none" stroke="#d0d0d0" stroke-width="0.6"/><rect x="6" y="1.8" width="8.2" height="10.8" fill="url(#ge264)"/><path d="M2 2.5 H4 M2 4.5 H4 M2 6.5 H4 M2 8.5 H4 M2 10.5 H4 M16 2.5 H18 M16 4.5 H18 M16 6.5 H18" stroke="#a8a8a8" stroke-width="0.7"/></svg>
<div class="t" style="left:1309px;top:265.33px;font-size:14.5px;line-height:14.5px;color:#ffffff;font-weight:400;letter-spacing:-0.3px;">adb.exe</div>
<div class="t" style="left:1451px;top:265.82px;font-size:12.5px;line-height:12.5px;color:#c8c8c8;font-weight:400;letter-spacing:-0.35px;">Donnerstag, 26. Augus...</div>
<div class="t" style="left:1593px;top:265.82px;font-size:12.5px;line-height:12.5px;color:#c8c8c8;font-weight:400;letter-spacing:-0.2px;">Anwendung</div>
<div class="t" style="left:1735px;top:265.82px;font-size:12.5px;line-height:12.5px;color:#c8c8c8;font-weight:400;letter-spacing:-0.4px;">5,67 MB</div>
<svg style="position:absolute;left:1278px;top:298px" width="15" height="19" viewBox="0 0 15 19"><path d="M0.5 0.3 H9.3 L14 5 V18 H0.5 Z" fill="#f6f6f6"/><path d="M9.3 0.3 V5 H14 Z" fill="#dedede"/><circle cx="5.2" cy="8" r="2.4" fill="none" stroke="#a4acb6" stroke-width="1.8" stroke-dasharray="1.1 0.8"/><circle cx="5.2" cy="8" r="1.9" fill="none" stroke="#a4acb6" stroke-width="1.2"/><circle cx="9.2" cy="12.2" r="1.9" fill="none" stroke="#4d5660" stroke-width="1.6" stroke-dasharray="1 0.7"/><circle cx="9.2" cy="12.2" r="1.5" fill="none" stroke="#4d5660" stroke-width="1"/></svg>
<div class="t" style="left:1309px;top:301.33px;font-size:14.5px;line-height:14.5px;color:#ffffff;font-weight:400;letter-spacing:-0.3px;">AdbWinApi.dll</div>
<div class="t" style="left:1451px;top:301.82px;font-size:12.5px;line-height:12.5px;color:#c8c8c8;font-weight:400;letter-spacing:-0.35px;">Donnerstag, 26. Augus...</div>
<div class="t" style="left:1593px;top:301.82px;font-size:12.5px;line-height:12.5px;color:#c8c8c8;font-weight:400;letter-spacing:-0.2px;">Anwendungserweiteru...</div>
<div class="t" style="left:1735px;top:301.82px;font-size:12.5px;line-height:12.5px;color:#c8c8c8;font-weight:400;letter-spacing:-0.4px;">95,5 KB</div>
<svg style="position:absolute;left:1278px;top:334px" width="15" height="19" viewBox="0 0 15 19"><path d="M0.5 0.3 H9.3 L14 5 V18 H0.5 Z" fill="#f6f6f6"/><path d="M9.3 0.3 V5 H14 Z" fill="#dedede"/><circle cx="5.2" cy="8" r="2.4" fill="none" stroke="#a4acb6" stroke-width="1.8" stroke-dasharray="1.1 0.8"/><circle cx="5.2" cy="8" r="1.9" fill="none" stroke="#a4acb6" stroke-width="1.2"/><circle cx="9.2" cy="12.2" r="1.9" fill="none" stroke="#4d5660" stroke-width="1.6" stroke-dasharray="1 0.7"/><circle cx="9.2" cy="12.2" r="1.5" fill="none" stroke="#4d5660" stroke-width="1"/></svg>
<div class="t" style="left:1309px;top:337.33px;font-size:14.5px;line-height:14.5px;color:#ffffff;font-weight:400;letter-spacing:-0.3px;">AdbWinUsbApi.dll</div>
<div class="t" style="left:1451px;top:337.82px;font-size:12.5px;line-height:12.5px;color:#c8c8c8;font-weight:400;letter-spacing:-0.35px;">Donnerstag, 26. Augus...</div>
<div class="t" style="left:1593px;top:337.82px;font-size:12.5px;line-height:12.5px;color:#c8c8c8;font-weight:400;letter-spacing:-0.2px;">Anwendungserweiteru...</div>
<div class="t" style="left:1735px;top:337.82px;font-size:12.5px;line-height:12.5px;color:#c8c8c8;font-weight:400;letter-spacing:-0.4px;">61,5 KB</div>
<svg style="position:absolute;left:1275px;top:372px" width="20" height="15" viewBox="0 0 20 15"><defs><linearGradient id="ge372" x1="0" y1="0" x2="0" y2="1"><stop offset="0" stop-color="#2a8ae4"/><stop offset="1" stop-color="#0a56b4"/></linearGradient></defs><rect x="0" y="0" width="20" height="14.5" fill="#f3f3f3"/><rect x="0.5" y="0.5" width="19" height="13.5" fill="none" stroke="#d0d0d0" stroke-width="0.6"/><rect x="6" y="1.8" width="8.2" height="10.8" fill="url(#ge372)"/><path d="M2 2.5 H4 M2 4.5 H4 M2 6.5 H4 M2 8.5 H4 M2 10.5 H4 M16 2.5 H18 M16 4.5 H18 M16 6.5 H18" stroke="#a8a8a8" stroke-width="0.7"/></svg>
<div class="t" style="left:1309px;top:373.33px;font-size:14.5px;line-height:14.5px;color:#ffffff;font-weight:400;letter-spacing:-0.3px;">dmtracedump.exe</div>
<div class="t" style="left:1451px;top:373.82px;font-size:12.5px;line-height:12.5px;color:#c8c8c8;font-weight:400;letter-spacing:-0.35px;">Donnerstag, 26. Augus...</div>
<div class="t" style="left:1593px;top:373.82px;font-size:12.5px;line-height:12.5px;color:#c8c8c8;font-weight:400;letter-spacing:-0.2px;">Anwendung</div>
<div class="t" style="left:1735px;top:373.82px;font-size:12.5px;line-height:12.5px;color:#c8c8c8;font-weight:400;letter-spacing:-0.4px;">237,5 KB</div>
<svg style="position:absolute;left:1275px;top:405px" width="20" height="20" viewBox="0 0 20 20"><defs><linearGradient id="gz405" x1="0" y1="0" x2="1" y2="1"><stop offset="0" stop-color="#ffe9a0"/><stop offset="1" stop-color="#f2cc60"/></linearGradient></defs><rect x="0.5" y="0.5" width="18.5" height="18.5" fill="url(#gz405)"/><rect x="8.6" y="0.5" width="1.8" height="18.5" fill="#7c7c7c"/><rect x="0.5" y="8.6" width="5" height="1.2" fill="#8a8a8a"/><rect x="5.2" y="2" width="12.3" height="8.3" rx="0.6" fill="#fdfdfd" stroke="#6a6a6a" stroke-width="0.7"/><text x="11.3" y="8.8" font-size="5.6" font-family="Liberation Sans" font-weight="700" text-anchor="middle" fill="#333">ZIP</text></svg>
<div class="t" style="left:1309px;top:409.33px;font-size:14.5px;line-height:14.5px;color:#ffffff;font-weight:400;letter-spacing:-0.3px;">e-0.18-r-20210901...</div>
<div class="t" style="left:1451px;top:409.82px;font-size:12.5px;line-height:12.5px;color:#c8c8c8;font-weight:400;letter-spacing:-0.35px;">Mittwoch, 13. Oktober...</div>
<div class="t" style="left:1593px;top:409.82px;font-size:12.5px;line-height:12.5px;color:#c8c8c8;font-weight:400;letter-spacing:-0.2px;">ZIP-Archiv</div>
<div class="t" style="left:1735px;top:409.82px;font-size:12.5px;line-height:12.5px;color:#c8c8c8;font-weight:400;letter-spacing:-0.4px;">1004,86 MB</div>
<svg style="position:absolute;left:1275px;top:444px" width="20" height="15" viewBox="0 0 20 15"><defs><linearGradient id="ge444" x1="0" y1="0" x2="0" y2="1"><stop offset="0" stop-color="#2a8ae4"/><stop offset="1" stop-color="#0a56b4"/></linearGradient></defs><rect x="0" y="0" width="20" height="14.5" fill="#f3f3f3"/><rect x="0.5" y="0.5" width="19" height="13.5" fill="none" stroke="#d0d0d0" stroke-width="0.6"/><rect x="6" y="1.8" width="8.2" height="10.8" fill="url(#ge444)"/><path d="M2 2.5 H4 M2 4.5 H4 M2 6.5 H4 M2 8.5 H4 M2 10.5 H4 M16 2.5 H18 M16 4.5 H18 M16 6.5 H18" stroke="#a8a8a8" stroke-width="0.7"/></svg>
<div class="t" style="left:1309px;top:445.33px;font-size:14.5px;line-height:14.5px;color:#ffffff;font-weight:400;letter-spacing:-0.3px;">etc1tool.exe</div>
<div class="t" style="left:1451px;top:445.82px;font-size:12.5px;line-height:12.5px;color:#c8c8c8;font-weight:400;letter-spacing:-0.35px;">Donnerstag, 26. Augus...</div>
<div class="t" style="left:1593px;top:445.82px;font-size:12.5px;line-height:12.5px;color:#c8c8c8;font-weight:400;letter-spacing:-0.2px;">Anwendung</div>
<div class="t" style="left:1735px;top:445.82px;font-size:12.5px;line-height:12.5px;color:#c8c8c8;font-weight:400;letter-spacing:-0.4px;">430 KB</div>
<svg style="position:absolute;left:1275px;top:480px" width="20" height="15" viewBox="0 0 20 15"><defs><linearGradient id="ge480" x1="0" y1="0" x2="0" y2="1"><stop offset="0" stop-color="#2a8ae4"/><stop offset="1" stop-color="#0a56b4"/></linearGradient></defs><rect x="0" y="0" width="20" height="14.5" fill="#f3f3f3"/><rect x="0.5" y="0.5" width="19" height="13.5" fill="none" stroke="#d0d0d0" stroke-width="0.6"/><rect x="6" y="1.8" width="8.2" height="10.8" fill="url(#ge480)"/><path d="M2 2.5 H4 M2 4.5 H4 M2 6.5 H4 M2 8.5 H4 M2 10.5 H4 M16 2.5 H18 M16 4.5 H18 M16 6.5 H18" stroke="#a8a8a8" stroke-width="0.7"/></svg>
<div class="t" style="left:1309px;top:481.33px;font-size:14.5px;line-height:14.5px;color:#ffffff;font-weight:400;letter-spacing:-0.3px;">fastboot.exe</div>
<div class="t" style="left:1451px;top:481.82px;font-size:12.5px;line-height:12.5px;color:#c8c8c8;font-weight:400;letter-spacing:-0.35px;">Donnerstag, 26. Augus...</div>
<div class="t" style="left:1593px;top:481.82px;font-size:12.5px;line-height:12.5px;color:#c8c8c8;font-weight:400;letter-spacing:-0.2px;">Anwendung</div>
<div class="t" style="left:1735px;top:481.82px;font-size:12.5px;line-height:12.5px;color:#c8c8c8;font-weight:400;letter-spacing:-0.4px;">1,56 MB</div>
<svg style="position:absolute;left:1275px;top:516px" width="20" height="15" viewBox="0 0 20 15"><defs><linearGradient id="ge516" x1="0" y1="0" x2="0" y2="1"><stop offset="0" stop-color="#2a8ae4"/><stop offset="1" stop-color="#0a56b4"/></linearGradient></defs><rect x="0" y="0" width="20" height="14.5" fill="#f3f3f3"/><rect x="0.5" y="0.5" width="19" height="13.5" fill="none" stroke="#d0d0d0" stroke-width="0.6"/><rect x="6" y="1.8" width="8.2" height="10.8" fill="url(#ge516)"/><path d="M2 2.5 H4 M2 4.5 H4 M2 6.5 H4 M2 8.5 H4 M2 10.5 H4 M16 2.5 H18 M16 4.5 H18 M16 6.5 H18" stroke="#a8a8a8" stroke-width="0.7"/></svg>
<div class="t" style="left:1309px;top:517.33px;font-size:14.5px;line-height:14.5px;color:#ffffff;font-weight:400;letter-spacing:-0.3px;">hprof-conv.exe</div>
<div class="t" style="left:1451px;top:517.82px;font-size:12.5px;line-height:12.5px;color:#c8c8c8;font-weight:400;letter-spacing:-0.35px;">Donnerstag, 26. Augus...</div>
<div class="t" style="left:1593px;top:517.82px;font-size:12.5px;line-height:12.5px;color:#c8c8c8;font-weight:400;letter-spacing:-0.2px;">Anwendung</div>
<div class="t" style="left:1735px;top:517.82px;font-size:12.5px;line-height:12.5px;color:#c8c8c8;font-weight:400;letter-spacing:-0.4px;">42,5 KB</div>
<svg style="position:absolute;left:1278px;top:550px" width="15" height="19" viewBox="0 0 15 19"><path d="M0.5 0.3 H9.3 L14 5 V18 H0.5 Z" fill="#f6f6f6"/><path d="M9.3 0.3 V5 H14 Z" fill="#dedede"/><circle cx="5.2" cy="8" r="2.4" fill="none" stroke="#a4acb6" stroke-width="1.8" stroke-dasharray="1.1 0.8"/><circle cx="5.2" cy="8" r="1.9" fill="none" stroke="#a4acb6" stroke-width="1.2"/><circle cx="9.2" cy="12.2" r="1.9" fill="none" stroke="#4d5660" stroke-width="1.6" stroke-dasharray="1 0.7"/><circle cx="9.2" cy="12.2" r="1.5" fill="none" stroke="#4d5660" stroke-width="1"/></svg>
<div class="t" style="left:1309px;top:553.33px;font-size:14.5px;line-height:14.5px;color:#ffffff;font-weight:400;letter-spacing:-0.3px;">libwinpthread-1.dll</div>
<div class="t" style="left:1451px;top:553.82px;font-size:12.5px;line-height:12.5px;color:#c8c8c8;font-weight:400;letter-spacing:-0.35px;">Donnerstag, 26. Augus...</div>
<div class="t" style="left:1593px;top:553.82px;font-size:12.5px;line-height:12.5px;color:#c8c8c8;font-weight:400;letter-spacing:-0.2px;">Anwendungserweiteru...</div>
<div class="t" style="left:1735px;top:553.82px;font-size:12.5px;line-height:12.5px;color:#c8c8c8;font-weight:400;letter-spacing:-0.4px;">226,17 KB</div>
<svg style="position:absolute;left:1275px;top:585px" width="20" height="20" viewBox="0 0 20 20"><defs><linearGradient id="gz585" x1="0" y1="0" x2="1" y2="1"><stop offset="0" stop-color="#ffe9a0"/><stop offset="1" stop-color="#f2cc60"/></linearGradient></defs><rect x="0.5" y="0.5" width="18.5" height="18.5" fill="url(#gz585)"/><rect x="8.6" y="0.5" width="1.8" height="18.5" fill="#7c7c7c"/><rect x="0.5" y="8.6" width="5" height="1.2" fill="#8a8a8a"/><rect x="5.2" y="2" width="12.3" height="8.3" rx="0.6" fill="#fdfdfd" stroke="#6a6a6a" stroke-width="0.7"/><text x="11.3" y="8.8" font-size="5.6" font-family="Liberation Sans" font-weight="700" text-anchor="middle" fill="#333">ZIP</text></svg>
<div class="t" style="left:1309px;top:589.33px;font-size:14.5px;line-height:14.5px;color:#ffffff;font-weight:400;letter-spacing:-0.3px;">lineage-18.1.zip</div>
<div class="t" style="left:1451px;top:589.82px;font-size:12.5px;line-height:12.5px;color:#c8c8c8;font-weight:400;letter-spacing:-0.35px;">Donnerstag, 26. Augus...</div>
<div class="t" style="left:1593px;top:589.82px;font-size:12.5px;line-height:12.5px;color:#c8c8c8;font-weight:400;letter-spacing:-0.2px;">ZIP-Archiv</div>
<div class="t" style="left:1735px;top:589.82px;font-size:12.5px;line-height:12.5px;color:#c8c8c8;font-weight:400;letter-spacing:-0.4px;">752,08 MB</div>
<svg style="position:absolute;left:1275px;top:624px" width="20" height="15" viewBox="0 0 20 15"><defs><linearGradient id="ge624" x1="0" y1="0" x2="0" y2="1"><stop offset="0" stop-color="#2a8ae4"/><stop offset="1" stop-color="#0a56b4"/></linearGradient></defs><rect x="0" y="0" width="20" height="14.5" fill="#f3f3f3"/><rect x="0.5" y="0.5" width="19" height="13.5" fill="none" stroke="#d0d0d0" stroke-width="0.6"/><rect x="6" y="1.8" width="8.2" height="10.8" fill="url(#ge624)"/><path d="M2 2.5 H4 M2 4.5 H4 M2 6.5 H4 M2 8.5 H4 M2 10.5 H4 M16 2.5 H18 M16 4.5 H18 M16 6.5 H18" stroke="#a8a8a8" stroke-width="0.7"/></svg>
<div class="t" style="left:1309px;top:625.33px;font-size:14.5px;line-height:14.5px;color:#ffffff;font-weight:400;letter-spacing:-0.3px;">make_f2fs.exe</div>
<div class="t" style="left:1451px;top:625.82px;font-size:12.5px;line-height:12.5px;color:#c8c8c8;font-weight:400;letter-spacing:-0.35px;">Donnerstag, 26. Augus...</div>
<div class="t" style="left:1593px;top:625.82px;font-size:12.5px;line-height:12.5px;color:#c8c8c8;font-weight:400;letter-spacing:-0.2px;">Anwendung</div>
<div class="t" style="left:1735px;top:625.82px;font-size:12.5px;line-height:12.5px;color:#c8c8c8;font-weight:400;letter-spacing:-0.4px;">489,5 KB</div>
<svg style="position:absolute;left:1275px;top:660px" width="20" height="15" viewBox="0 0 20 15"><defs><linearGradient id="ge660" x1="0" y1="0" x2="0" y2="1"><stop offset="0" stop-color="#2a8ae4"/><stop offset="1" stop-color="#0a56b4"/></linearGradient></defs><rect x="0" y="0" width="20" height="14.5" fill="#f3f3f3"/><rect x="0.5" y="0.5" width="19" height="13.5" fill="none" stroke="#d0d0d0" stroke-width="0.6"/><rect x="6" y="1.8" width="8.2" height="10.8" fill="url(#ge660)"/><path d="M2 2.5 H4 M2 4.5 H4 M2 6.5 H4 M2 8.5 H4 M2 10.5 H4 M16 2.5 H18 M16 4.5 H18 M16 6.5 H18" stroke="#a8a8a8" stroke-width="0.7"/></svg>
<div class="t" style="left:1309px;top:661.33px;font-size:14.5px;line-height:14.5px;color:#ffffff;font-weight:400;letter-spacing:-0.6px;">make_f2fs_casefold...</div>
<div class="t" style="left:1451px;top:661.82px;font-size:12.5px;line-height:12.5px;color:#c8c8c8;font-weight:400;letter-spacing:-0.35px;">Donnerstag, 26. Augus...</div>
<div class="t" style="left:1593px;top:661.82px;font-size:12.5px;line-height:12.5px;color:#c8c8c8;font-weight:400;letter-spacing:-0.2px;">Anwendung</div>
<div class="t" style="left:1735px;top:661.82px;font-size:12.5px;line-height:12.5px;color:#c8c8c8;font-weight:400;letter-spacing:-0.4px;">489,5 KB</div>
<svg style="position:absolute;left:1278px;top:694px" width="15" height="19" viewBox="0 0 15 19"><path d="M0.5 0.3 H9.3 L14 5 V18 H0.5 Z" fill="#f6f6f6"/><path d="M9.3 0.3 V5 H14 Z" fill="#dedede"/></svg>
<div class="t" style="left:1309px;top:697.33px;font-size:14.5px;line-height:14.5px;color:#ffffff;font-weight:400;letter-spacing:-0.3px;">mke2fs.conf</div>
<div class="t" style="left:1451px;top:697.82px;font-size:12.5px;line-height:12.5px;color:#c8c8c8;font-weight:400;letter-spacing:-0.35px;">Donnerstag, 26. Augus...</div>
<div class="t" style="left:1593px;top:697.82px;font-size:12.5px;line-height:12.5px;color:#c8c8c8;font-weight:400;letter-spacing:-0.2px;">CONF-Datei</div>
<div class="t" style="left:1735px;top:697.82px;font-size:12.5px;line-height:12.5px;color:#c8c8c8;font-weight:400;letter-spacing:-0.4px;">1,13 KB</div>
<svg style="position:absolute;left:1275px;top:732px" width="20" height="15" viewBox="0 0 20 15"><defs><linearGradient id="ge732" x1="0" y1="0" x2="0" y2="1"><stop offset="0" stop-color="#2a8ae4"/><stop offset="1" stop-color="#0a56b4"/></linearGradient></defs><rect x="0" y="0" width="20" height="14.5" fill="#f3f3f3"/><rect x="0.5" y="0.5" width="19" height="13.5" fill="none" stroke="#d0d0d0" stroke-width="0.6"/><rect x="6" y="1.8" width="8.2" height="10.8" fill="url(#ge732)"/><path d="M2 2.5 H4 M2 4.5 H4 M2 6.5 H4 M2 8.5 H4 M2 10.5 H4 M16 2.5 H18 M16 4.5 H18 M16 6.5 H18" stroke="#a8a8a8" stroke-width="0.7"/></svg>
<div class="t" style="left:1309px;top:733.33px;font-size:14.5px;line-height:14.5px;color:#ffffff;font-weight:400;letter-spacing:-0.3px;">mke2fs.exe</div>
<div class="t" style="left:1451px;top:733.82px;font-size:12.5px;line-height:12.5px;color:#c8c8c8;font-weight:400;letter-spacing:-0.35px;">Donnerstag, 26. Augus...</div>
<div class="t" style="left:1593px;top:733.82px;font-size:12.5px;line-height:12.5px;color:#c8c8c8;font-weight:400;letter-spacing:-0.2px;">Anwendung</div>
<div class="t" style="left:1735px;top:733.82px;font-size:12.5px;line-height:12.5px;color:#c8c8c8;font-weight:400;letter-spacing:-0.4px;">752,5 KB</div>
<svg style="position:absolute;left:1278px;top:766px" width="15" height="19" viewBox="0 0 15 19"><path d="M0.5 0.3 H9.3 L14 5 V18 H0.5 Z" fill="#f6f6f6"/><path d="M9.3 0.3 V5 H14 Z" fill="#dedede"/></svg>
<div class="t" style="left:1309px;top:769.33px;font-size:14.5px;line-height:14.5px;color:#ffffff;font-weight:400;letter-spacing:-0.3px;">NOTICE.txt</div>
<div class="t" style="left:1451px;top:769.82px;font-size:12.5px;line-height:12.5px;color:#c8c8c8;font-weight:400;letter-spacing:-0.35px;">Donnerstag, 26. Augus...</div>
<div class="t" style="left:1593px;top:769.82px;font-size:12.5px;line-height:12.5px;color:#c8c8c8;font-weight:400;letter-spacing:-0.2px;">Textdokument</div>
<div class="t" style="left:1735px;top:769.82px;font-size:12.5px;line-height:12.5px;color:#c8c8c8;font-weight:400;letter-spacing:-0.4px;">743,55 KB</div>
<svg style="position:absolute;left:1278px;top:802px" width="15" height="19" viewBox="0 0 15 19"><path d="M0.5 0.3 H9.3 L14 5 V18 H0.5 Z" fill="#f6f6f6"/><path d="M9.3 0.3 V5 H14 Z" fill="#dedede"/><defs><radialGradient id="gi802" cx="0.4" cy="0.35" r="0.7"><stop offset="0" stop-color="#f2f2f2"/><stop offset="1" stop-color="#a8a8a8"/></radialGradient></defs><circle cx="7" cy="10.5" r="4.7" fill="url(#gi802)"/><circle cx="7" cy="10.5" r="0.9" fill="#ddd"/></svg>
<div class="t" style="left:1309px;top:805.33px;font-size:14.5px;line-height:14.5px;color:#ffffff;font-weight:400;letter-spacing:-0.3px;">recovery.img</div>
<div class="t" style="left:1451px;top:805.82px;font-size:12.5px;line-height:12.5px;color:#c8c8c8;font-weight:400;letter-spacing:-0.35px;">Donnerstag, 26. Augus...</div>
<div class="t" style="left:1593px;top:805.82px;font-size:12.5px;line-height:12.5px;color:#c8c8c8;font-weight:400;letter-spacing:-0.2px;">Datenträgerimagedatei</div>
<div class="t" style="left:1735px;top:805.82px;font-size:12.5px;line-height:12.5px;color:#c8c8c8;font-weight:400;letter-spacing:-0.4px;">24,11 MB</div>
<svg style="position:absolute;left:1278px;top:838px" width="15" height="19" viewBox="0 0 15 19"><path d="M0.5 0.3 H9.3 L14 5 V18 H0.5 Z" fill="#f6f6f6"/><path d="M9.3 0.3 V5 H14 Z" fill="#dedede"/><defs><radialGradient id="gi838" cx="0.4" cy="0.35" r="0.7"><stop offset="0" stop-color="#f2f2f2"/><stop offset="1" stop-color="#a8a8a8"/></radialGradient></defs><circle cx="7" cy="10.5" r="4.7" fill="url(#gi838)"/><circle cx="7" cy="10.5" r="0.9" fill="#ddd"/></svg>
<div class="t" style="left:1309px;top:841.33px;font-size:14.5px;line-height:14.5px;color:#ffffff;font-weight:400;letter-spacing:-0.3px;">recovery-e-0.18-r-...</div>
<div class="t" style="left:1451px;top:841.82px;font-size:12.5px;line-height:12.5px;color:#c8c8c8;font-weight:400;letter-spacing:-0.35px;">Mittwoch, 13. Oktober...</div>
<div class="t" style="left:1593px;top:841.82px;font-size:12.5px;line-height:12.5px;color:#c8c8c8;font-weight:400;letter-spacing:-0.2px;">Datenträgerimagedatei</div>
<div class="t" style="left:1735px;top:841.82px;font-size:12.5px;line-height:12.5px;color:#c8c8c8;font-weight:400;letter-spacing:-0.4px;">23,72 MB</div>
<svg style="position:absolute;left:1278px;top:874px" width="15" height="19" viewBox="0 0 15 19"><path d="M0.5 0.3 H9.3 L14 5 V18 H0.5 Z" fill="#f6f6f6"/><path d="M9.3 0.3 V5 H14 Z" fill="#dedede"/></svg>
<div class="t" style="left:1309px;top:877.33px;font-size:14.5px;line-height:14.5px;color:#ffffff;font-weight:400;letter-spacing:-0.3px;">source.properties</div>
<div class="t" style="left:1451px;top:877.82px;font-size:12.5px;line-height:12.5px;color:#c8c8c8;font-weight:400;letter-spacing:-0.35px;">Donnerstag, 26. Augus...</div>
<div class="t" style="left:1593px;top:877.82px;font-size:12.5px;line-height:12.5px;color:#c8c8c8;font-weight:400;letter-spacing:-0.2px;">PROPERTIES-Datei</div>
<div class="t" style="left:1735px;top:877.82px;font-size:12.5px;line-height:12.5px;color:#c8c8c8;font-weight:400;letter-spacing:-0.4px;">38 B</div>
<svg style="position:absolute;left:1275px;top:912px" width="20" height="15" viewBox="0 0 20 15"><defs><linearGradient id="ge912" x1="0" y1="0" x2="0" y2="1"><stop offset="0" stop-color="#2a8ae4"/><stop offset="1" stop-color="#0a56b4"/></linearGradient></defs><rect x="0" y="0" width="20" height="14.5" fill="#f3f3f3"/><rect x="0.5" y="0.5" width="19" height="13.5" fill="none" stroke="#d0d0d0" stroke-width="0.6"/><rect x="6" y="1.8" width="8.2" height="10.8" fill="url(#ge912)"/><path d="M2 2.5 H4 M2 4.5 H4 M2 6.5 H4 M2 8.5 H4 M2 10.5 H4 M16 2.5 H18 M16 4.5 H18 M16 6.5 H18" stroke="#a8a8a8" stroke-width="0.7"/></svg>
<div class="t" style="left:1309px;top:913.33px;font-size:14.5px;line-height:14.5px;color:#ffffff;font-weight:400;letter-spacing:-0.3px;">sqlite3.exe</div>
<div class="t" style="left:1451px;top:913.82px;font-size:12.5px;line-height:12.5px;color:#c8c8c8;font-weight:400;letter-spacing:-0.35px;">Donnerstag, 26. Augus...</div>
<div class="t" style="left:1593px;top:913.82px;font-size:12.5px;line-height:12.5px;color:#c8c8c8;font-weight:400;letter-spacing:-0.2px;">Anwendung</div>
<div class="t" style="left:1735px;top:913.82px;font-size:12.5px;line-height:12.5px;color:#c8c8c8;font-weight:400;letter-spacing:-0.4px;">1,16 MB</div>
</div></body></html>
